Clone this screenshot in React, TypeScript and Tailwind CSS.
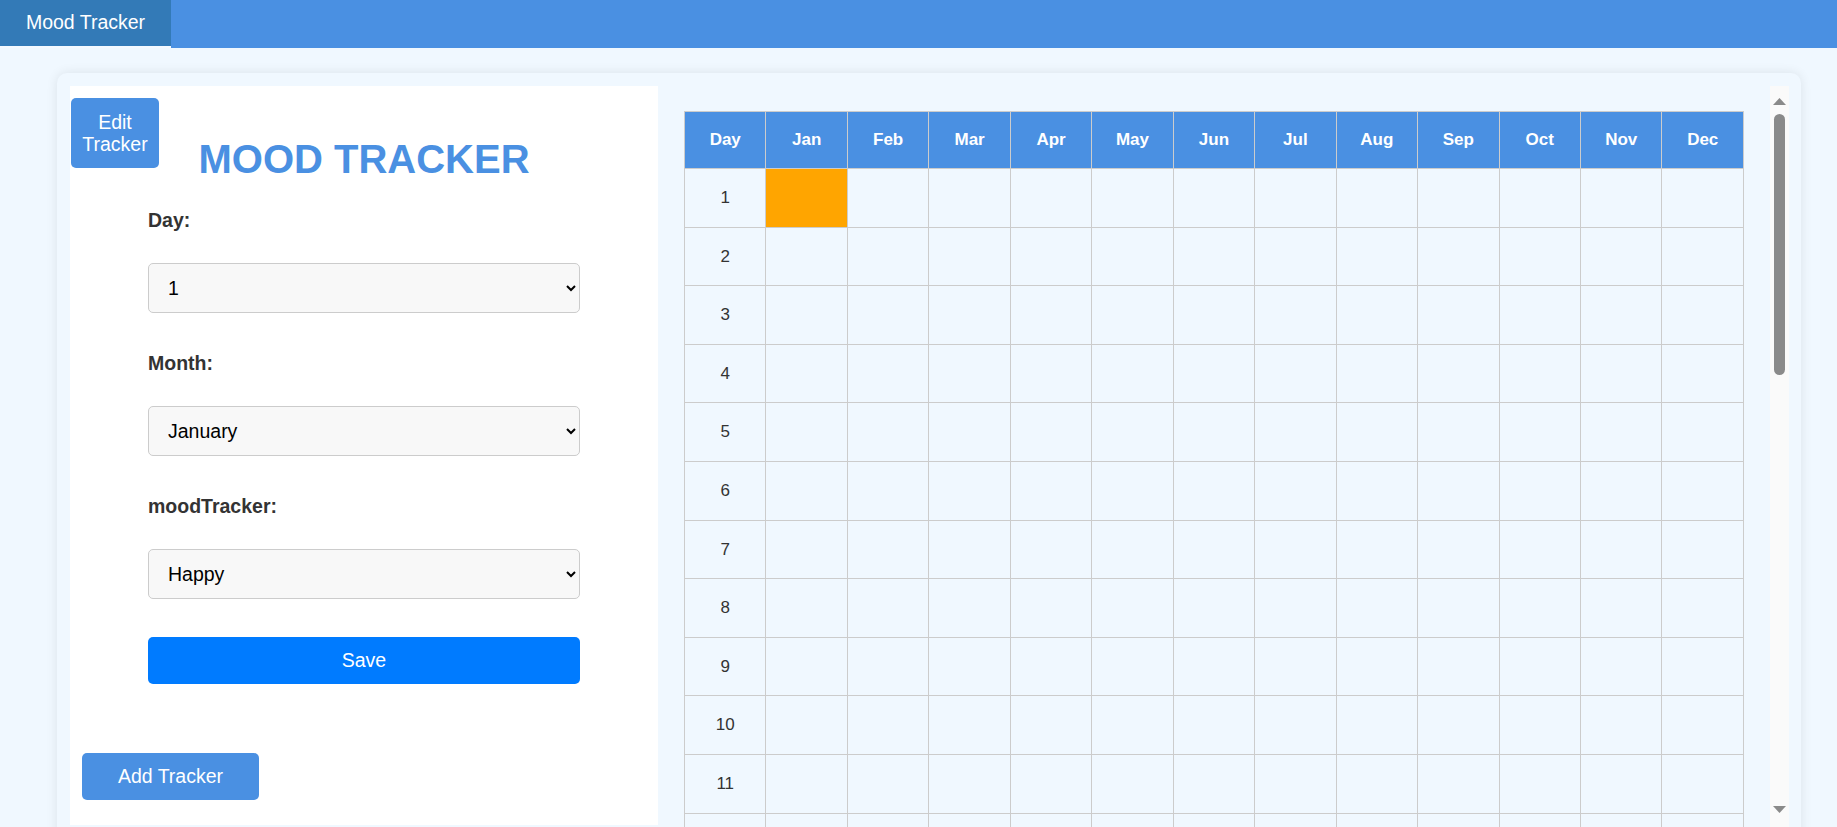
import React from 'react'

const months = ['Jan', 'Feb', 'Mar', 'Apr', 'May', 'Jun', 'Jul', 'Aug', 'Sep', 'Oct', 'Nov', 'Dec']
const monthNames = [
  'January', 'February', 'March', 'April', 'May', 'June',
  'July', 'August', 'September', 'October', 'November', 'December',
]
const moods = ['Happy', 'Sad', 'Angry', 'Calm', 'Tired']
const days = Array.from({ length: 31 }, (_, i) => i + 1)

// mood colours, keyed "day-monthIndex"
const entries: Record<string, string> = { '1-0': 'bg-[#ffa500]' }

const Field: React.FC<{ label: string; options: (string | number)[] }> = ({ label, options }) => (
  <div className="w-full">
    <label className="block text-[19.5px] font-bold leading-[22.4px] text-[#333] mt-[39px]">{label}</label>
    <select className="mt-[31.5px] block h-[50px] w-full rounded-[5px] border border-[#ccc] bg-[#f8f8f8] pl-[15px] pr-[3px] text-[19.5px] text-black">
      {options.map((o) => (
        <option key={o}>{o}</option>
      ))}
    </select>
  </div>
)

export default function App() {
  return (
    <div className="h-screen overflow-hidden bg-[#f0f8ff] font-['Liberation_Sans',Arial,sans-serif]">
      {/* Top bar */}
      <nav className="flex h-[48px] bg-[#4a90e2]">
        <div className="flex h-[48px] w-[171px] items-center justify-center border-b-2 border-[#f4f9ff] bg-[#337ab7] text-[19.5px] text-white">
          Mood Tracker
        </div>
      </nav>

      {/* Card */}
      <div className="ml-[57px] mt-[25px] flex h-[900px] w-[1744px] rounded-[10px] bg-[#f0f8ff] pb-[13px] pl-[13px] pr-[12px] pt-[13px] shadow-[0_0_12px_rgba(0,0,0,0.09)]">
        {/* Form panel */}
        <div className="relative flex h-[739px] w-[588px] shrink-0 flex-col bg-white pt-[50px]">
          <button className="absolute left-[1px] top-[12px] flex h-[70px] w-[88px] items-center justify-center rounded-[5px] bg-[#4a90e2] text-center text-[19.5px] leading-[22.4px] text-white">
            Edit
            <br />
            Tracker
          </button>

          <h1 className="text-center text-[40px] font-bold leading-[46px] text-[#4a90e2]">MOOD TRACKER</h1>

          <div className="mx-auto mt-[-12px] flex w-[432px] flex-col">
            <Field label="Day:" options={days} />
            <Field label="Month:" options={monthNames} />
            <Field label="moodTracker:" options={moods} />
            <button className="mt-[38px] h-[47.4px] w-full rounded-[5px] bg-[#007bff] text-[19.5px] text-white">Save</button>
          </div>

          <button className="ml-[12px] mt-[68.6px] h-[47.4px] w-[177px] rounded-[5px] bg-[#4a90e2] text-[19.5px] text-white">
            Add Tracker
          </button>
        </div>

        {/* Calendar grid */}
        <div className="flex h-[741px] flex-1">
          <div className="flex-1 overflow-hidden pl-[26px] pt-[25px]">
            <table className="w-[1060px] table-fixed border-collapse text-[17px]">
              <thead>
                <tr>
                  <th className="h-[57px] border border-[#ccc] bg-[#4a90e2] p-0 font-bold text-white">Day</th>
                  {months.map((m) => (
                    <th key={m} className="h-[57px] border border-[#ccc] bg-[#4a90e2] p-0 font-bold text-white">
                      {m}
                    </th>
                  ))}
                </tr>
              </thead>
              <tbody>
                {days.map((d) => (
                  <tr key={d}>
                    <td className="h-[58.6px] border border-[#ccc] p-0 text-center text-[#333]">{d}</td>
                    {months.map((m, mi) => (
                      <td key={m} className={`h-[58.6px] border border-[#ccc] p-0 ${entries[`${d}-${mi}`] ?? ''}`} />
                    ))}
                  </tr>
                ))}
              </tbody>
            </table>
          </div>

          {/* scrollbar */}
          <div className="flex w-[19px] shrink-0 flex-col items-center bg-[#fafafa] pt-[12px]">
            <svg width="13" height="7" viewBox="0 0 13 7">
              <polygon points="6.5,0 13,7 0,7" fill="#8a8a8a" />
            </svg>
            <div className="mt-[9px] h-[261px] w-[11px] rounded-[6px] bg-[#8a8a8a]" />
            <div className="flex-1" />
            <svg width="13" height="7" viewBox="0 0 13 7" className="mb-[14px]">
              <polygon points="0,0 13,0 6.5,7" fill="#8a8a8a" />
            </svg>
          </div>
        </div>
      </div>
    </div>
  )
}
